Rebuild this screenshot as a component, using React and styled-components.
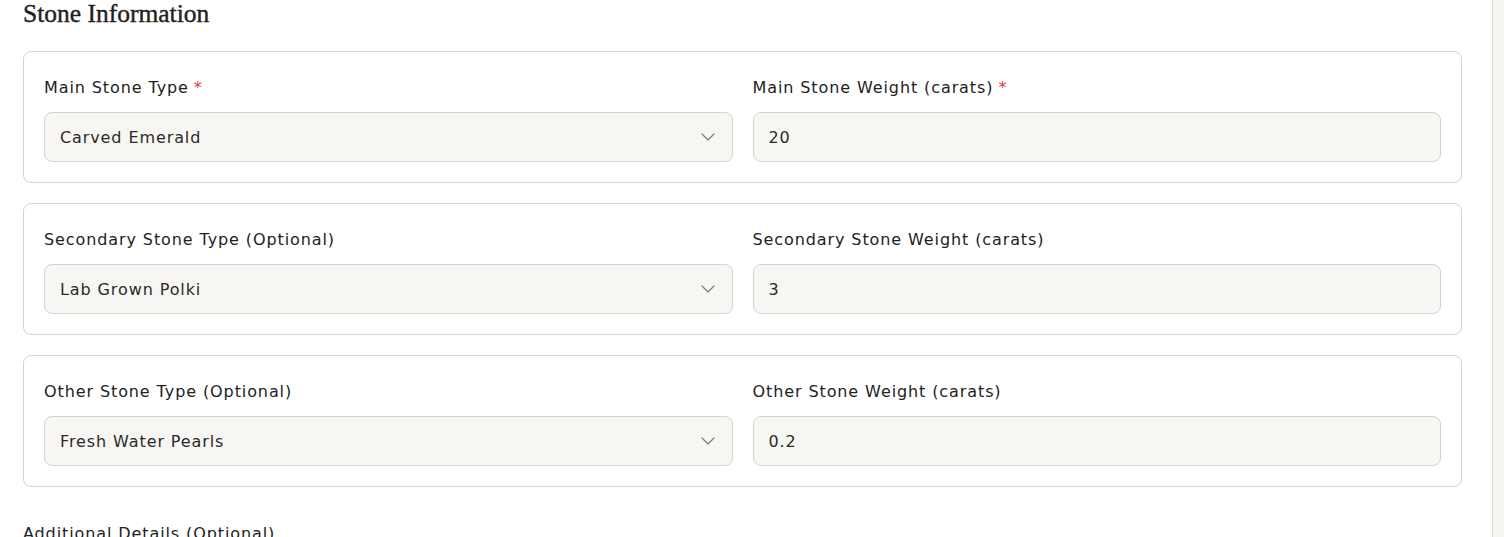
import React from 'react'
import styled, { createGlobalStyle } from 'styled-components'
import { ChevronDown } from 'lucide-react'

const Global = createGlobalStyle`
  html, body { margin: 0; padding: 0; background: #fff; }
  body { font-family: "DejaVu Sans", "Noto Sans", sans-serif; color: #222; }
  * { box-sizing: border-box; }
`

const Page = styled.div`
  display: flex;
  width: 1504px;
  height: 537px;
  overflow: hidden;
`

const Main = styled.div`
  flex: 1;
  padding: 0 30px 0 23px;
  border-right: 1px solid #d6d6d6;
`

const Side = styled.div`
  width: 11px;
  background: #f6f5f1;
`

const Title = styled.h2`
  margin: 0;
  height: 51px;
  line-height: 28px;
  font-family: "Liberation Serif", "DejaVu Serif", serif;
  font-weight: 400;
  font-size: 25.5px;
  -webkit-text-stroke: 0.4px #1f1f1f;
  color: #1f1f1f;
`

const Card = styled.div`
  border: 1px solid #d4d4d4;
  border-radius: 8px;
  padding: 26px 20px 20px;
  display: grid;
  grid-template-columns: 1fr 1fr;
  column-gap: 20px;
  margin-bottom: 20px;
`

const Field = styled.div`
  display: flex;
  flex-direction: column;
`

const Label = styled.label`
  font-size: 16px;
  letter-spacing: 0.9px;
  line-height: 20px;
  color: #222;
  margin-bottom: 14px;
  span { color: #e53945; margin-left: 5px; }
`

const Box = styled.div`
  height: 50px;
  border: 1px solid #d3d3d3;
  border-radius: 8px;
  background: #f7f6f3;
  display: flex;
  align-items: center;
  justify-content: space-between;
  padding: 0 12px 0 15px;
  font-size: 16px;
  letter-spacing: 0.9px;
  color: #2a2a2a;
  svg { color: #7a7a7a; }
`

const SubLabel = styled.div`
  font-size: 16px;
  letter-spacing: 0.9px;
  line-height: 20px;
  color: #222;
  margin-top: 37px;
`

const rows = [
  { type: 'Main Stone Type', typeVal: 'Carved Emerald', weight: 'Main Stone Weight (carats)', weightVal: '20', req: true },
  { type: 'Secondary Stone Type (Optional)', typeVal: 'Lab Grown Polki', weight: 'Secondary Stone Weight (carats)', weightVal: '3' },
  { type: 'Other Stone Type (Optional)', typeVal: 'Fresh Water Pearls', weight: 'Other Stone Weight (carats)', weightVal: '0.2' },
]

export default function App() {
  return (
    <Page>
      <Global />
      <Main>
        <Title>Stone Information</Title>
        {rows.map(r => (
          <Card key={r.type}>
            <Field>
              <Label>{r.type}{r.req && <span>*</span>}</Label>
              <Box>{r.typeVal}<ChevronDown size={24} strokeWidth={1.2} /></Box>
            </Field>
            <Field>
              <Label>{r.weight}{r.req && <span>*</span>}</Label>
              <Box>{r.weightVal}</Box>
            </Field>
          </Card>
        ))}
        <SubLabel>Additional Details (Optional)</SubLabel>
      </Main>
      <Side />
    </Page>
  )
}
